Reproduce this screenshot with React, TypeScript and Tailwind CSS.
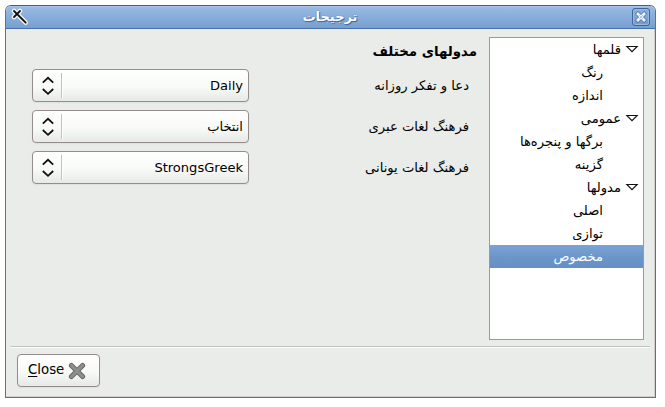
import React from "react";

const FONT = "font-['DejaVu_Sans',sans-serif]";

type TreeRow = { label: string; parent?: boolean; selected?: boolean };

const tree: TreeRow[] = [
  { label: "قلمها", parent: true },
  { label: "رنگ" },
  { label: "اندازه" },
  { label: "عمومی", parent: true },
  { label: "برگها و پنجره‌ها" },
  { label: "گزینه" },
  { label: "مدولها", parent: true },
  { label: "اصلی" },
  { label: "توازی" },
  { label: "مخصوص", selected: true },
];

const fields = [
  { label: "دعا و تفکر روزانه", value: "Daily" },
  { label: "فرهنگ لغات عبری", value: "انتخاب" },
  { label: "فرهنگ لغات یونانی", value: "StrongsGreek" },
];

function WandIcon() {
  return (
    <svg width="20" height="20" viewBox="0 0 20 20" fill="none" strokeLinecap="round">
      <path d="M4 4 L15.7 15.7 M10 4 L4 10" stroke="#f1f1f1" strokeWidth="4.6" />
      <path d="M4 4 L15.7 15.7 M10 4 L4 10" stroke="#111" strokeWidth="1.8" />
    </svg>
  );
}

function TitleBar() {
  return (
    <header className="flex h-[23px] items-center rounded-t-[5px] border-b border-[#4a70a5] bg-linear-to-b from-[#9abce4] to-[#779fcf] shadow-[inset_0_1px_0_#a9c6e9]">
      <div className="flex w-[30px] shrink-0 pl-[4px]">
        <WandIcon />
      </div>
      <h1
        dir="rtl"
        className="flex-1 pr-px text-center text-[13px] leading-[22px] font-bold text-white [text-shadow:1px_1px_1px_#3d639a,0_0_1px_#3d639a]"
      >
        ترجیحات
      </h1>
      <div className="flex w-[30px] shrink-0 justify-end pr-[5px]">
        <button className="flex size-[18px] items-center justify-center rounded-[3px] border border-[#3d659b] bg-linear-to-b from-[#8db2de] to-[#7199cb] shadow-[inset_0_0_0_1px_#98b9e1]">
          <svg width="12" height="12" viewBox="0 0 12 12" fill="none">
            <path d="M1.3 1.3 L10.7 10.7 M10.7 1.3 L1.3 10.7" stroke="#587fb3" strokeWidth="4.4" />
            <path d="M2 2 L10 10 M10 2 L2 10" stroke="#f3f7fb" strokeWidth="2.6" />
            <path d="M4 4 L8 8 M8 4 L4 8" stroke="#a9c3e2" strokeWidth="0.9" />
          </svg>
        </button>
      </div>
    </header>
  );
}

function Combo({ value }: { value: string }) {
  return (
    <button className="flex h-[33px] w-[217px] items-center rounded-[4px] border border-[#958c8c] bg-linear-to-b from-white from-0% via-[#f8faf7] via-55% to-[#e6e9e6] pl-[7px] pr-[5px] shadow-[0_1px_1px_#dfe1de]">
      <svg width="16" height="22" viewBox="0 0 16 22" fill="none" stroke="#111" strokeWidth="1.8">
        <path d="M2.8 7.6 L8 2.8 L13.2 7.6 M2.8 14 L8 18.8 L13.2 14" />
      </svg>
      <span className="ml-[5px] h-[25px] w-[2px] border-l border-[#c0c2bf] bg-white" />
      <span dir="auto" className="flex-1 text-right text-[13.05px] leading-[18px]">
        {value}
      </span>
    </button>
  );
}

function Form() {
  return (
    <section className="flex w-[478px] flex-col pr-[7px] pl-[26px]">
      <h2 dir="rtl" className="mt-[6px] h-[26px] text-[13.33px] leading-[18px] font-bold">
        مدولهای مختلف
      </h2>
      <div className="flex flex-col gap-2">
        {fields.map((f) => (
          <div key={f.label} className="flex h-[33px] items-center justify-between pr-[8px]">
            <Combo value={f.value} />
            <label dir="rtl" className="text-[13.15px] leading-[18px]">
              {f.label}
            </label>
          </div>
        ))}
      </div>
    </section>
  );
}

function Tree() {
  return (
    <nav dir="rtl" className="ml-[5px] h-[303px] w-[155px] border border-[#9c9a99] bg-white">
      {tree.map((row) => (
        <div
          key={row.label}
          className={
            row.selected
              ? "flex h-[23px] items-center bg-linear-to-b from-[#7ba3d5] from-0% via-[#6c96ca] via-50% to-[#6690c4] pr-[40px] text-white"
              : row.parent
                ? "flex h-[23px] items-center pr-[4px]"
                : "flex h-[23px] items-center pr-[40px]"
          }
        >
          {row.parent && (
            <svg width="14" height="10" viewBox="0 0 14 10" className="ml-[4px]">
              <path d="M1.8 1.5 H12.2 L7 6.7 Z" fill="#fff" stroke="#111" strokeWidth="1.1" />
            </svg>
          )}
          <span className="text-[13.15px] leading-[18px] whitespace-nowrap">{row.label}</span>
        </div>
      ))}
    </nav>
  );
}

export default function App() {
  return (
    <div className={`${FONT} h-[407px] w-[665px] bg-white pt-[5px] pl-[5px] text-black`}>
      <div className="flex h-[393px] w-[651px] flex-col rounded-t-[6px] border border-[#736d6c] border-t-[#3c5e8f] bg-[#eaece9] shadow-[inset_-1px_-1px_0_#d0cdca]">
        <TitleBar />
        <main className="flex pt-[8px]">
          <Form />
          <Tree />
        </main>
        <div className="mx-[5px] mt-[6px] h-[2px] border-t border-[#bfc1be] bg-white" />
        <footer className="pt-[6px] pl-[11px]">
          <button className="flex h-[33px] w-[83px] items-center rounded-[4px] border border-[#958c8c] bg-linear-to-b from-white from-0% via-[#f8faf7] via-55% to-[#e6e9e6] pl-[10px] shadow-[0_1px_1px_#dfe1de]">
            <span className="-mt-[2px] text-[13.33px] leading-[18px]">
              <span className="underline underline-offset-2">C</span>lose
            </span>
            <svg width="18" height="18" viewBox="0 0 18 18" fill="none" strokeLinecap="round" className="ml-[4px]">
              <path d="M3.4 3.4 L14.6 14.6 M14.6 3.4 L3.4 14.6" stroke="#656565" strokeWidth="5" />
              <path d="M3.4 3.4 L14.6 14.6 M14.6 3.4 L3.4 14.6" stroke="#8e8e8e" strokeWidth="3" />
            </svg>
          </button>
        </footer>
      </div>
    </div>
  );
}
